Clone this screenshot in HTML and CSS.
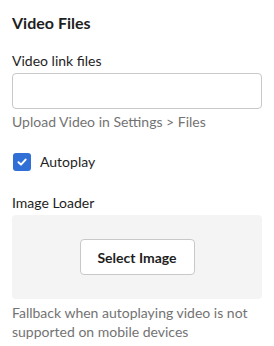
FILE: index.html
```html
<!DOCTYPE html>
<html>
<head>
<meta charset="utf-8">
<link rel="stylesheet" href="styles.css">
</head>
<body>
<div class="panel">
  <h2 class="title">Video Files</h2>
  <div class="field first">
    <label class="label">Video link files</label>
    <input class="input" type="text">
    <div class="help">Upload Video in Settings &gt; Files</div>
  </div>
  <label class="check">
    <span class="box"><svg width="12" height="12" viewBox="0 0 12 12"><path d="M2.5 6.2 L5 8.6 L9.6 3.6" fill="none" stroke="#fff" stroke-width="2" stroke-linecap="round" stroke-linejoin="round"/></svg></span>
    <span class="check-text">Autoplay</span>
  </label>
  <div class="field second">
    <div class="label">Image Loader</div>
    <div class="loader">
      <button class="btn">Select Image</button>
    </div>
    <div class="help multi">Fallback when autoplaying video is not supported on mobile devices</div>
  </div>
</div>
</body>
</html>
```

FILE: styles.css
```css
* { box-sizing: border-box; }
body {
  margin: 0;
  background: #fff;
  font-family: Lato, "Liberation Sans", sans-serif;
  color: #1e1e1e;
}
.panel {
  padding: 12px 12px 0 12px;
  display: flex;
  flex-direction: column;
}
.title {
  margin: 0;
  font-size: 16px;
  font-weight: 700;
  line-height: 22px;
}
.field {
  display: flex;
  flex-direction: column;
}
.field.first { margin-top: 17px; }
.field.second { margin-top: 21px; }
.label {
  font-size: 14px;
  line-height: 20px;
  margin-bottom: 2px;
}
.input {
  width: 250px;
  height: 36px;
  border: 1px solid #c8c8c8;
  border-radius: 4px;
  margin: 0;
}
.help {
  font-size: 14px;
  line-height: 20px;
  color: #737373;
  margin-top: 3px;
}
.help.multi {
  line-height: 19px;
  margin-top: 4px;
}
.check {
  display: flex;
  align-items: center;
  gap: 9px;
  margin-top: 20px;
  margin-left: 1px;
  height: 20px;
}
.box {
  width: 18px;
  height: 18px;
  border-radius: 3px;
  background: #2f6fd6;
  display: flex;
  align-items: center;
  justify-content: center;
}
.check-text { font-size: 14px; line-height: 20px; }
.loader {
  width: 250px;
  height: 84px;
  background: #f4f4f4;
  border-radius: 4px;
  display: flex;
  align-items: center;
  justify-content: center;
}
.btn {
  width: 115px;
  height: 36px;
  background: #fff;
  border: 1px solid #c8c8c8;
  border-radius: 4px;
  font-family: inherit;
  font-size: 14px;
  font-weight: 700;
  color: #1e1e1e;
}
```
